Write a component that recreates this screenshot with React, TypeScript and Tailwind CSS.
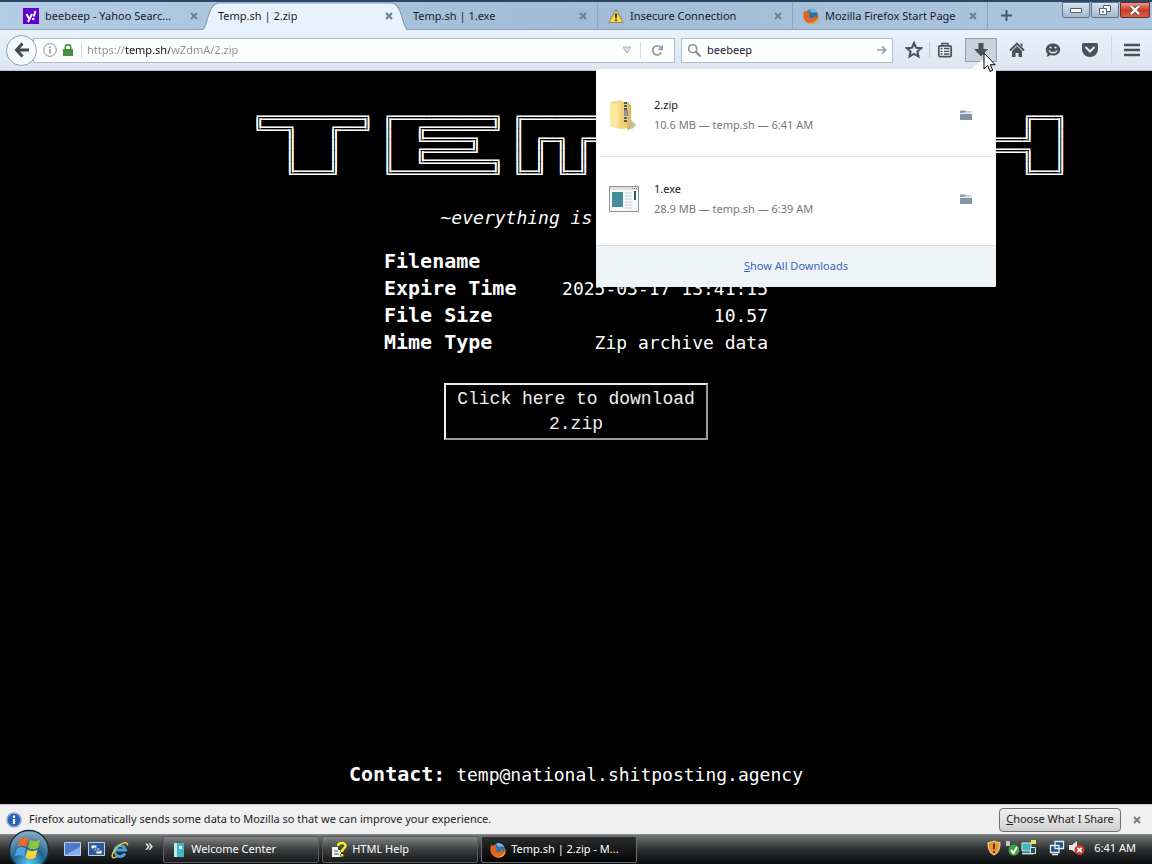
import type { ReactNode } from 'react';

interface TabProps {
    title: string;
    icon?: ReactNode;
    active?: boolean;
    divider?: boolean;
}

interface DownloadRowProps {
    name: string;
    detail: string;
    icon: ReactNode;
}

const LOGO = [
    '╔═════════╗ ╔═════════╗ ╔═════════╗ ╔═════════╗     ╔═════════╗ ╔══╗   ╔══╗',
    '╚══╗   ╔══╝ ║  ╔══════╝ ║         ║ ║  ╔═══╗  ║     ║  ╔══════╝ ║  ║   ║  ║',
    '   ║   ║    ║  ╚════╗   ║ ╔═╗ ╔═╗ ║ ║  ╚═══╝  ║     ║  ╚══════╗ ║  ╚═══╝  ║',
    '   ║   ║    ║  ╔════╝   ║ ║ ║ ║ ║ ║ ║  ╔══════╝     ╚══════╗  ║ ║  ╔═══╗  ║',
    '   ║   ║    ║  ╚══════╗ ║ ║ ║ ║ ║ ║ ║  ║        ╔═╗ ╔══════╝  ║ ║  ║   ║  ║',
    '   ╚═══╝    ╚═════════╝ ╚═╝ ╚═╝ ╚═╝ ╚══╝        ╚═╝ ╚═════════╝ ╚══╝   ╚══╝'
].join('\n');

const FILE_INFO = [
    { label: 'Filename', value: '2.zip' },
    { label: 'Expire Time', value: '2025-03-17 13:41:15' },
    { label: 'File Size', value: '10.57' },
    { label: 'Mime Type', value: 'Zip archive data' }
];

function FirefoxIcon({ className = '' }: { className?: string }) {
    return (
        <svg viewBox="0 0 16 16" className={`h-4 w-4 shrink-0 ${className}`} aria-hidden>
            <circle cx="8.5" cy="7.5" r="6.5" fill="#2f6fa8" />
            <path d="M6 2c3-2 7 0 8 3-2-1-4-1-5 0z" fill="#6fc0e0" />
            <path d="M2 2c0 1 .6 1.600 1 2 1-1 2.500-1 3.500-.6-.8.6-1 1.300-1 2l2 .4c0 1-1.500 1-1.700 2C6 10 8 11 10 10c1.500-.8 2-2 1.700-3.500C13 8 13 10 12 11c2-1 3-3.500 2.300-6C16 8 16 11 13.800 13.400 11 16.500 5 16.200 2.300 13-.2 10-.3 5 2 2z" fill="#e4641b" />
            <path d="M13 12.500c2-2 2.500-5 1.500-7.500 1.800 4 .6 8-2.500 9.700-2 1-5 1-7 0 3 .5 6-.2 8-2.200z" fill="#f6b13c" />
        </svg>
    );
}

function WarningIcon() {
    return (
        <svg viewBox="0 0 16 16" className="h-4 w-4 shrink-0" aria-hidden>
            <path d="M8 1.500 15.300 14.500H.7z" fill="#f5d84a" stroke="#8f8660" strokeLinejoin="round" />
            <path d="M7 5.500h2l-.4 5H7.400zM7.200 11.500h1.600v1.600H7.200z" fill="#222" />
        </svg>
    );
}

function YahooIcon() {
    return (
        <svg viewBox="0 0 16 16" className="h-4 w-4 shrink-0" aria-hidden>
            <path d="M0 0h16v16H0z" fill="#5f01d1" />
            <path d="m3.500 6 2.800 5M9 6l-4 8M12.500 3l-1.800 5.500" stroke="#fff" strokeWidth="2" fill="none" />
            <circle cx="10.300" cy="11" r="1.200" fill="#fff" />
        </svg>
    );
}

function CloseMark() {
    return (
        <svg viewBox="0 0 8 8" className="h-2 w-2" aria-hidden>
            <path d="m1 1 6 6M7 1 1 7" stroke="#6e7f8e" strokeWidth="2" />
        </svg>
    );
}

function Tab({ title, icon, active = false, divider = false }: TabProps) {
    return (
        <div className={`relative flex h-7 w-[195px] min-w-0 items-center px-[10px] ${divider ? 'border-r border-[#8fa6bd]' : ''}`}>
            {active && (
                <svg viewBox="0 0 206 28" preserveAspectRatio="none" className="absolute inset-y-0 -left-2 h-[29px] w-[210px]" aria-hidden>
                    <path d="M0 28C9 27 6 1 19 1H187C200 1 197 27 206 28z" fill="#e8f2fc" stroke="#8096ad" />
                    <path d="M0 28h206" stroke="#e8f2fc" strokeWidth="2" />
                </svg>
            )}
            <button className="relative flex min-w-0 flex-1 items-center gap-[6px] text-left">
                {icon}
                <span className="truncate">{title}</span>
            </button>
            <button className="relative ml-1" aria-label={`Close ${title}`}>
                <CloseMark />
            </button>
        </div>
    );
}

function WindowControls() {
    return (
        <div className="ml-auto flex h-4 self-start">
            <button aria-label="Minimize" className="flex w-7 items-center justify-center rounded-b-xs border border-[#60758c] bg-linear-to-b from-[#d6e3f0] to-[#a4b9cf]">
                <svg viewBox="0 0 12 6" className="h-[6px] w-3" aria-hidden>
                    <path d="M.5 1.500h11v4H.5z" fill="#fff" stroke="#55606c" />
                </svg>
            </button>
            <button aria-label="Restore" className="ml-px flex w-7 items-center justify-center rounded-b-xs border border-[#60758c] bg-linear-to-b from-[#d6e3f0] to-[#a4b9cf]">
                <svg viewBox="0 0 14 12" className="h-3 w-[14px]" aria-hidden>
                    <path d="M5.500 1.500h7v6h-7z" fill="#fff" stroke="#55606c" />
                    <path d="M1.500 4.500h7v6h-7z" fill="#fff" stroke="#55606c" />
                    <path d="M4 7h2v1.500H4z" fill="#55606c" />
                </svg>
            </button>
            <button aria-label="Close window" className="ml-px flex w-[30px] items-center justify-center rounded-b-xs border border-[#6b2a24] bg-linear-to-b from-[#e59a8c] via-[#c93a24] to-[#d4604a]">
                <svg viewBox="0 0 12 10" className="h-[10px] w-3" aria-hidden>
                    <path d="m2 1 8 8M10 1 2 9" stroke="#6b4a48" strokeWidth="4" />
                    <path d="m2 1 8 8M10 1 2 9" stroke="#fff" strokeWidth="2.400" />
                </svg>
            </button>
        </div>
    );
}

function FolderIcon() {
    return (
        <svg viewBox="0 0 12 10" className="h-[10px] w-3" aria-hidden>
            <path d="M0 1.500 1 .5h4l1 1h5.500v1.700H0zM0 4h12v6H0z" fill="#8593a8" />
            <path d="M0 3.600 5 3l1-.6h6" stroke="#fff" strokeWidth=".8" fill="none" />
        </svg>
    );
}

function ZipIcon() {
    return (
        <svg viewBox="0 0 32 32" className="h-8 w-8" aria-hidden>
            <path d="M2 3 13 1l3 2v26l-4 1L2 27z" fill="#f5dc82" />
            <path d="M13 3h8v26l-8 1z" fill="#ecd07a" />
            <path d="M20 4l3 2v15l5 5-5 4-4 1z" fill="#d9bc62" />
            <path d="M2 3l8 3v22l-8-1z" fill="#fbe99f" />
            <path d="M17.500 3v20" stroke="#555a5e" strokeWidth="3" strokeDasharray="2 1" />
            <path d="M16 11h4v6h-4z" fill="#8d9296" />
            <path d="M20 23l3-1 5 4-4 4z" fill="#c3bda3" />
        </svg>
    );
}

function ExeIcon() {
    return (
        <svg viewBox="0 0 32 32" className="h-8 w-8" aria-hidden>
            <path d="M1.500 3.500h29v25h-29z" fill="#f7f9f9" stroke="#8b9294" />
            <path d="M2 4h28v3H2z" fill="#dfe3e5" />
            <path d="M24 5.500h5" stroke="#777" strokeDasharray="1 1" />
            <path d="M4 9h11v15H4z" fill="#3f9292" />
            <path d="M4 17l11-5v12H4z" fill="#4b82ad" opacity=".5" />
            <path d="M17 10h7M17 13h7M17 16h7M17 19h7M17 22h7M17 25h7" stroke="#c5cbd0" />
            <path d="M27 8v9" stroke="#2e5e5a" strokeWidth="2" />
        </svg>
    );
}

function DownloadRow({ name, detail, icon }: DownloadRowProps) {
    return (
        <li className="mx-1 flex h-[84px] items-center pl-2 pr-5">
            {icon}
            <div className="ml-[14px] flex-1 leading-5">
                <div className="text-[#1a1a1a]">{name}</div>
                <div className="text-[#777]">{detail}</div>
            </div>
            <button aria-label={`Open folder containing ${name}`}>
                <FolderIcon />
            </button>
        </li>
    );
}

function DownloadsPanel() {
    return (
        <div className="absolute right-px top-full z-10 mt-[7px] w-[400px] rounded-xs bg-white shadow-sm">
            <svg viewBox="0 0 28 10" className="absolute -top-[9px] right-0 h-[10px] w-7" aria-hidden>
                <path d="M2 10 14 0l12 10z" fill="#fdfdfe" />
            </svg>
            <ul className="divide-y divide-[#e0e3e6] pb-1 pt-1">
                <DownloadRow name="2.zip" detail="10.6 MB — temp.sh — 6:41 AM" icon={<ZipIcon />} />
                <DownloadRow name="1.exe" detail="28.9 MB — temp.sh — 6:39 AM" icon={<ExeIcon />} />
            </ul>
            <button className="h-[42px] w-full rounded-b-xs border-t border-[#d5dde3] bg-[#eff4f7] text-[#3f62c0]">
                <span className="underline">S</span>how All Downloads
            </button>
        </div>
    );
}

function Cursor() {
    return (
        <svg viewBox="0 0 13 21" className="absolute left-[18px] top-[14px] z-20 h-[21px] w-[13px]" aria-hidden>
            <path d="M1 1v16l3.700-3.500L7 19.500l2.700-1.200-2.500-5.600h5z" fill="#fff" stroke="#000" />
        </svg>
    );
}

function NavBar() {
    return (
        <div className="flex h-[41px] items-center border-b border-[#b9c6d3] bg-linear-to-b from-[#e8f2fc] to-[#dbe6f1] pl-[6px] pr-3">
            <button aria-label="Back" className="z-10 flex h-[31px] w-[31px] shrink-0 items-center justify-center rounded-full border border-[#93a3b3] bg-[#f3f8fd]">
                <svg viewBox="0 0 16 16" className="h-4 w-4" aria-hidden>
                    <path d="M8.500 1.500 2.500 8l6 6.500M3 8h12" stroke="#414a52" strokeWidth="3" fill="none" />
                </svg>
            </button>
            <div className="-ml-1 flex h-[25px] min-w-0 flex-1 items-center border border-[#adbfce] bg-[#fdfeff] pl-[9px]">
                <svg viewBox="0 0 14 14" className="h-[14px] w-[14px]" aria-hidden>
                    <circle cx="7" cy="7" r="6.300" fill="none" stroke="#8b8b8b" />
                    <path d="M7 6v4.500M7 3.500V5" stroke="#8b8b8b" strokeWidth="1.500" />
                </svg>
                <svg viewBox="0 0 10 12" className="ml-[6px] h-3 w-[10px]" aria-hidden>
                    <path d="M2.200 6V3.500a2.800 2.800 0 0 1 5.600 0V6" fill="none" stroke="#42913a" strokeWidth="1.500" />
                    <path d="M0 5h10v7H0z" fill="#42913a" />
                </svg>
                <span className="ml-2 h-[15px] w-px bg-[#d5dbe0]" />
                <input
                    aria-label="Address"
                    defaultValue="https://temp.sh/wZdmA/2.zip"
                    className="ml-[5px] min-w-0 flex-1 bg-linear-[90deg,#8e8e8e_38px,#141414_38px,#141414_83px,#8e8e8e_83px] bg-clip-text text-transparent outline-none"
                />
                <button aria-label="Show history">
                    <svg viewBox="0 0 10 8" className="h-2 w-[10px]" aria-hidden>
                        <path d="M1 1h8L5 7z" fill="#e0e3e5" stroke="#a9afb4" />
                    </svg>
                </button>
                <span className="ml-2 h-4 w-px bg-[#d5dbe0]" />
                <button aria-label="Reload" className="mx-[10px]">
                    <svg viewBox="0 0 13 13" className="h-[13px] w-[13px]" aria-hidden>
                        <path d="M10.200 8.500A4.500 4.500 0 1 1 9.500 3.300" fill="none" stroke="#989ea3" strokeWidth="1.900" />
                        <path d="M12 .8v5.400H6.600z" fill="#989ea3" />
                    </svg>
                </button>
            </div>
            <div className="ml-[6px] flex h-[25px] w-[212px] items-center border border-[#adbfce] bg-[#fdfeff] px-[5px]">
                <svg viewBox="0 0 15 15" className="h-[15px] w-[15px]" aria-hidden>
                    <circle cx="5.700" cy="5.700" r="4" fill="none" stroke="#888e93" strokeWidth="1.600" />
                    <path d="m8.500 8.500 5 5" stroke="#888e93" strokeWidth="2.200" />
                </svg>
                <input aria-label="Search" defaultValue="beebeep" className="ml-[5px] min-w-0 flex-1 outline-none" />
                <button aria-label="Go">
                    <svg viewBox="0 0 10 10" className="h-[10px] w-[10px]" aria-hidden>
                        <path d="M0 5h8M5 1.300 8.700 5 5 8.700" fill="none" stroke="#969ca1" strokeWidth="1.500" />
                    </svg>
                </button>
            </div>
            <button aria-label="Bookmark this page" className="ml-3">
                <svg viewBox="0 0 18 18" className="h-[18px] w-[18px]" aria-hidden>
                    <path d="m9 2 2.100 4.700 5.100.5-3.800 3.400 1.100 5L9 13l-4.500 2.600 1.100-5-3.800-3.400 5.100-.5z" fill="none" stroke="#4a5258" strokeWidth="2" />
                </svg>
            </button>
            <span className="ml-[6px] h-4 w-px bg-[#c3cdd6]" />
            <button aria-label="Bookmarks" className="ml-[7px]">
                <svg viewBox="0 0 16 16" className="h-4 w-4" aria-hidden>
                    <rect x="1.800" y="3.800" width="12.400" height="10.900" rx="1.500" fill="#edf3f9" stroke="#4a5258" strokeWidth="1.700" />
                    <path d="M5 3.500V1.500h6v2" fill="none" stroke="#4a5258" strokeWidth="1.500" />
                    <path d="M3.500 6.500h2M7 6.500h5.500M3.500 9.300h2M7 9.300h5.500M3.500 12h2M7 12h5.500" stroke="#4a5258" strokeWidth="1.300" />
                </svg>
            </button>
            <div className="relative ml-3">
                <button aria-label="Downloads" className="flex h-6 w-8 items-center justify-center border border-[#93a1ae] bg-[#c9d3dc]">
                    <svg viewBox="0 0 14 14" className="h-[14px] w-[14px]" aria-hidden>
                        <path d="M4.500 0h5v6H14l-7 7.500L0 6h4.500z" fill="#4a5258" />
                    </svg>
                </button>
                <DownloadsPanel />
                <Cursor />
            </div>
            <button aria-label="Home" className="ml-3">
                <svg viewBox="0 0 16 16" className="h-4 w-4" aria-hidden>
                    <path d="m1 8.500 7-7 7 7" fill="none" stroke="#4a5258" strokeWidth="1.900" />
                    <path d="M11.500 1.500h2V5l-2-2zM3 9l5-5 5 5v6H9.500v-4h-3v4H3z" fill="#4a5258" />
                </svg>
            </button>
            <button aria-label="Hello" className="ml-5">
                <svg viewBox="0 0 16 16" className="h-4 w-4" aria-hidden>
                    <path d="M8 1.500c4.300 0 7.200 2.600 7.200 6s-2.900 6-7.200 6c-1 0-2-.2-2.800-.5C4 14.200 2.500 14.700 1 14.500c1-.8 1.500-1.800 1.500-2.800C1.300 10.500.8 9 .8 7.500c0-3.400 2.900-6 7.200-6z" fill="#4a5258" />
                    <path d="M4 8.500c1.500 3 6.500 3 8 0" fill="none" stroke="#e3ecf5" strokeWidth="1.500" />
                    <circle cx="5.500" cy="5.500" r="1.100" fill="#e3ecf5" />
                    <circle cx="10.500" cy="5.500" r="1.100" fill="#e3ecf5" />
                </svg>
            </button>
            <button aria-label="Save to Pocket" className="ml-5">
                <svg viewBox="0 0 18 16" className="h-4 w-[18px]" aria-hidden>
                    <path d="M2.500 1h13A1.500 1.500 0 0 1 17 2.500V7c0 4.500-3.600 8-8 8S1 11.500 1 7V2.500A1.500 1.500 0 0 1 2.500 1z" fill="#4a5258" />
                    <path d="m5 5.500 4 4 4-4" fill="none" stroke="#e3ecf5" strokeWidth="2" strokeLinecap="round" />
                </svg>
            </button>
            <span className="ml-3 h-7 w-px bg-[#cdd7e0]" />
            <button aria-label="Menu" className="ml-3">
                <svg viewBox="0 0 16 14" className="h-[14px] w-4" aria-hidden>
                    <path d="M0 2h16M0 7h16M0 12h16" stroke="#4a5258" strokeWidth="2.400" />
                </svg>
            </button>
        </div>
    );
}

function PageContent() {
    return (
        <main className="flex flex-1 flex-col bg-black font-['DejaVu_Sans_Mono','Liberation_Mono',monospace] text-[18px] text-white">
            <div className="mx-auto w-full max-w-[650px]">
                <h1>
                    <pre className="mt-[41px] pl-[2px] font-['DejaVu_Sans_Mono',monospace] leading-[11px]" aria-label="TEMP.SH">{LOGO}</pre>
                </h1>
                <p className="mt-[26px] text-center italic leading-[27px]">~everything is temporary~</p>
            </div>
            <table className="mx-auto mt-[17px] w-[384px] leading-[27px]">
                <tbody>
                    {FILE_INFO.map(({ label, value }) => (
                        <tr key={label} className="h-[27px]">
                            <th scope="row" className="whitespace-nowrap text-left text-[20px] font-bold">{label}</th>
                            <td className="whitespace-nowrap text-right">{value}</td>
                        </tr>
                    ))}
                </tbody>
            </table>
            <button className="mx-auto mt-[27px] w-[264px] border-2 border-b-[#999] border-l-[#eee] border-r-[#999] border-t-[#eee] pb-px pt-[2px] font-['Liberation_Mono',monospace] leading-[25px] text-[#eee]">
                Click here to download 2.zip
            </button>
            <p className="mb-4 mt-auto text-center leading-[27px]">
                <b className="text-[20px]">Contact:</b> temp@national.shitposting.agency
            </p>
        </main>
    );
}

function NotificationBar() {
    return (
        <div className="flex h-[30px] items-center border-t border-[#c9c9c9] bg-[#f0f0f0] pl-[6px] pr-[11px] text-[#222]">
            <svg viewBox="0 0 16 16" className="h-4 w-4" aria-hidden>
                <circle cx="8" cy="8" r="7" fill="#2a63b8" stroke="#8ea9cf" strokeWidth="1.500" />
                <path d="M8 7v5M8 3.500V6" stroke="#fff" strokeWidth="2.200" />
            </svg>
            <p className="ml-[7px] flex-1">Firefox automatically sends some data to Mozilla so that we can improve your experience.</p>
            <button className="h-6 w-[122px] whitespace-nowrap rounded-sm border border-[#707070] bg-linear-to-b from-[#f2f2f2] to-[#cfcfcf]">
                <span className="underline">C</span>hoose What I Share
            </button>
            <button aria-label="Dismiss" className="ml-3">
                <CloseMark />
            </button>
        </div>
    );
}

function TaskButton({ title, icon, active = false }: TabProps) {
    return (
        <button
            className={`flex h-[27px] w-[156px] items-center gap-[5px] rounded-xs border px-2 ${active ? 'border-[#6d6f70] bg-linear-to-b from-[#2c2d2e] to-[#050505]' : 'border-[#5b5d5e] bg-linear-to-b from-[#828485] via-[#3c3e3f] via-50% to-[#1a1b1c]'}`}
        >
            {icon}
            <span className="truncate">{title}</span>
        </button>
    );
}

function StartOrb() {
    return (
        <svg viewBox="0 0 42 42" className="h-[42px] w-[42px]" aria-hidden>
            <defs>
                <radialGradient id="orb" cx=".5" cy=".85" r=".8">
                    <stop offset="0" stopColor="#59d0f5" />
                    <stop offset=".5" stopColor="#1c6391" />
                    <stop offset="1" stopColor="#8ba9bd" />
                </radialGradient>
            </defs>
            <circle cx="21" cy="21" r="19.500" fill="url(#orb)" stroke="#16303f" strokeWidth="1.500" />
            <path d="M12 10c3-2 5-1.500 8.500 0l-2 8c-3-2-5.500-2-9 0z" fill="#ee6a2c" />
            <path d="M22 11c3 1.500 6 1.500 10 0l-2 8c-4 2-7 1.500-10 0z" fill="#8cc63e" />
            <path d="M9 19.500c3-2 6-2 9 0l-2 8c-3-2-6-2-9.500 0z" fill="#4aa5e6" />
            <path d="M19.500 20.500c3 2 6 2 10 0l-2 8c-4 2-7 2-10 0z" fill="#fbd13c" />
        </svg>
    );
}

function SystemTray() {
    return (
        <div className="ml-auto flex items-center pb-[3px]">
            <svg viewBox="0 0 16 16" className="h-4 w-4" aria-label="Security">
                <path d="M8 1c2 1 4 1.500 6 1.500C14 9 12.500 13 8 15 3.500 13 2 9 2 2.500 4 2.500 6 2 8 1z" fill="#e8952c" stroke="#f7dda7" />
                <path d="M8 3.500v6M8 11v2" stroke="#6b3510" strokeWidth="2" />
            </svg>
            <svg viewBox="0 0 16 16" className="ml-[2px] h-4 w-4" aria-label="Safely remove hardware">
                <path d="M2 1h4v5H2z" fill="#bfc7d4" />
                <circle cx="10" cy="10" r="5.500" fill="#3da33a" />
                <path d="m7 10 2.500 3L13 7" fill="none" stroke="#fff" strokeWidth="2" />
            </svg>
            <svg viewBox="0 0 16 16" className="ml-px h-4 w-4" aria-label="Virtual machine tools">
                <path d="M1 3h9v8H1z" fill="#45b3bd" stroke="#d9eef0" />
                <path d="M1 13.500h11" stroke="#a5dbe0" strokeWidth="2" />
                <path d="M10 0h5v4h-5z" fill="#e8e452" />
                <path d="M9.500 7.500h5v6h-5z" fill="#1d5660" stroke="#cfe6e8" />
            </svg>
            <svg viewBox="0 0 16 16" className="ml-3 h-4 w-4" aria-label="Network">
                <path d="M6 1.500h8.500v7H6zM1.500 5.500H10v7H1.500z" fill="#1d4f86" stroke="#e5eef5" strokeWidth="1.300" />
                <path d="M3 14.500h6" stroke="#e5eef5" strokeWidth="1.500" />
            </svg>
            <svg viewBox="0 0 16 16" className="ml-1 h-4 w-4" aria-label="Volume muted">
                <path d="M0 5h3l5-4v13l-5-4H0z" fill="#e8e8e8" />
                <circle cx="10.500" cy="10" r="5" fill="#d0382e" />
                <path d="m8.300 7.800 4.400 4.400m0-4.400-4.400 4.400" stroke="#fff" strokeWidth="1.700" />
            </svg>
            <span className="ml-[9px]">6:41 AM</span>
        </div>
    );
}

function Taskbar() {
    return (
        <footer className="flex h-[30px] items-center border-t border-[#8a8d8e] bg-linear-to-b from-[#737677] via-[#2d2f30] via-50% to-[#0b0c0d] pl-2 pr-4 text-white">
            <button aria-label="Start" className="-my-2 shrink-0">
                <StartOrb />
            </button>
            <button aria-label="Show desktop" className="ml-[14px]">
                <svg viewBox="0 0 17 15" className="h-[15px] w-[17px]" aria-hidden>
                    <path d="M.5.5h16v13H.5z" fill="#4d7ad0" stroke="#bcd0ea" />
                    <path d="M1 13 16 5v8z" fill="#87aee8" />
                </svg>
            </button>
            <button aria-label="Switch between windows" className="ml-[7px]">
                <svg viewBox="0 0 17 15" className="h-[15px] w-[17px]" aria-hidden>
                    <path d="M.5.5h16v13H.5z" fill="#2c5c99" stroke="#bcd0ea" />
                    <path d="M3 3h6v4H3zM6 6h6v3H6zM8 8h6v4H8z" fill="#fff" stroke="#2c5c99" />
                </svg>
            </button>
            <button aria-label="Internet Explorer" className="ml-[6px]">
                <svg viewBox="0 0 18 18" className="h-[18px] w-[18px]" aria-hidden>
                    <path d="M14 12.500A5.500 5.500 0 1 1 14.500 9H5" fill="none" stroke="#3fa4ea" strokeWidth="2.800" />
                    <path d="M16.500 4.500C17 .5 12 1 7.500 5S-.5 15 2 16.500c1 .5 2.500 0 4-1" fill="none" stroke="#f0c63a" strokeWidth="1.500" />
                </svg>
            </button>
            <button aria-label="More quick launch items" className="mb-[10px] ml-4 text-[16px] leading-4">»</button>
            <div className="ml-[10px] flex gap-[3px]">
                <TaskButton
                    title="Welcome Center"
                    icon={
                        <svg viewBox="0 0 14 16" className="h-4 w-[14px] shrink-0" aria-hidden>
                            <path d="M2 1h10v14H2z" fill="#41b8c4" />
                            <path d="M2 1h3v14H2z" fill="#bdeaf0" />
                            <path d="M7 4h3v3H7z" fill="#e6fafc" />
                        </svg>
                    }
                />
                <TaskButton
                    title="HTML Help"
                    icon={
                        <svg viewBox="0 0 16 16" className="h-4 w-4 shrink-0" aria-hidden>
                            <path d="M1 5h6v3h3v7H1z" fill="#f4f4f4" />
                            <path d="M3 9h4M3 12h5" stroke="#555" />
                            <path d="M7 4c0-4 8-4 7.500 0-.3 2.500-3.500 2.500-3.500 6M11 12v2.500" fill="none" stroke="#4b4a10" strokeWidth="4" />
                            <path d="M7 4c0-4 8-4 7.500 0-.3 2.500-3.500 2.500-3.500 6M11 12v2.500" fill="none" stroke="#f2ec2f" strokeWidth="2.500" />
                        </svg>
                    }
                />
                <TaskButton title="Temp.sh | 2.zip - M..." icon={<FirefoxIcon />} active />
            </div>
            <SystemTray />
        </footer>
    );
}

export default function App() {
    return (
        <div className="flex min-h-screen flex-col font-['Noto_Sans','Open_Sans',sans-serif] text-[11px] text-[#1b1b2b]">
            <header>
                <div className="flex h-[30px] border-b border-t-2 border-b-[#8ea6be] border-t-[#2c4564] bg-linear-to-r from-[#b3cce4] via-[#a2bcd7] to-[#adc6df] pl-[13px] pr-[2px]">
                    <Tab title="beebeep - Yahoo Searc..." icon={<YahooIcon />} />
                    <Tab title="Temp.sh | 2.zip" active />
                    <Tab title="Temp.sh | 1.exe" divider />
                    <Tab title="Insecure Connection" icon={<WarningIcon />} divider />
                    <Tab title="Mozilla Firefox Start Page" icon={<FirefoxIcon />} divider />
                    <button aria-label="New tab" className="px-[13px]">
                        <svg viewBox="0 0 11 11" className="h-[11px] w-[11px]" aria-hidden>
                            <path d="M5.500 0v11M0 5.500h11" stroke="#44586c" strokeWidth="2" />
                        </svg>
                    </button>
                    <WindowControls />
                </div>
                <NavBar />
            </header>
            <PageContent />
            <NotificationBar />
            <Taskbar />
        </div>
    );
}
